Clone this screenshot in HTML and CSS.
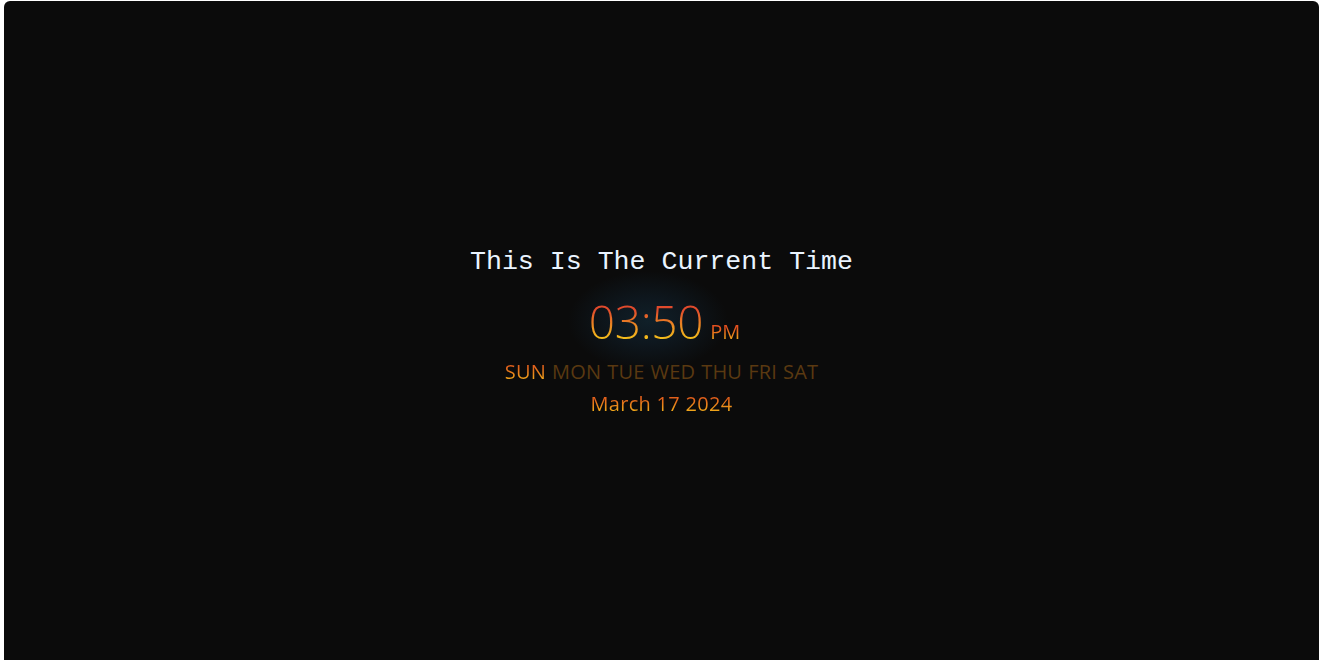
FILE: index.html
```html
<!DOCTYPE html>
<html lang="en">
<head>
<meta charset="utf-8">
<title>Current Time</title>
<link rel="stylesheet" href="styles.css">
</head>
<body>
<main class="panel">
  <section class="clock">
    <h1 class="title">This Is The Current Time</h1>
    <div class="time-row">
      <span class="time grad">03:50</span>
      <span class="ampm grad">PM</span>
    </div>
    <div class="days">
      <span class="day active grad">SUN</span>
      <span class="day">MON</span>
      <span class="day">TUE</span>
      <span class="day">WED</span>
      <span class="day">THU</span>
      <span class="day">FRI</span>
      <span class="day">SAT</span>
    </div>
    <div class="date grad">March 17 2024</div>
  </section>
</main>
</body>
</html>
```
FILE: styles.css
```css
html, body {
  margin: 0;
  padding: 0;
  background: #ffffff;
  overflow: hidden;
}

.panel {
  margin: 1px 0 0 4px;
  height: 659px;
  background: #0b0b0b;
  border-radius: 6px 6px 0 0;
  display: flex;
  align-items: center;
  justify-content: center;
}

.clock {
  display: flex;
  flex-direction: column;
  align-items: center;
  margin-top: 2px;
}

.title {
  margin: 0;
  font-family: "Liberation Mono", "Courier New", monospace;
  font-weight: normal;
  font-size: 26.6px;
  line-height: 30px;
  color: #eaf4ff;
}

.time-row {
  position: relative;
  isolation: isolate;
  display: flex;
  align-items: baseline;
  gap: 7px;
  margin: 21px 0 15px 6px;
  font-family: "Open Sans", "Noto Sans", sans-serif;
}

.time-row::before {
  content: "";
  position: absolute;
  z-index: -1;
  left: -26px;
  top: -27px;
  width: 170px;
  height: 100px;
  background: radial-gradient(ellipse 80px 50px at 50% 50%, #102029 0%, #0e171e 45%, rgba(11,11,11,0) 100%);
}

.grad {
  -webkit-background-clip: text;
  background-clip: text;
  color: transparent;
}

.time {
  font-size: 46px;
  font-weight: 300;
  line-height: 46px;
  letter-spacing: -0.3px;
  background-image: linear-gradient(180deg, #e04a2c 26%, #f6c81a 94%);
}

.ampm {
  font-size: 20px;
  font-weight: 400;
  line-height: 22px;
  background-image: linear-gradient(180deg, #e4501f 30%, #f2b21a 92%);
}

.days {
  display: flex;
  gap: 6px;
  font-family: "Open Sans", "Noto Sans", sans-serif;
  font-size: 20px;
  line-height: 26px;
  letter-spacing: 0.2px;
}

.day {
  color: #5a3911;
}

.day.active {
  color: transparent;
  background-image: linear-gradient(180deg, #e0601c 30%, #f2b41a 90%);
}

.date {
  margin-top: 6px;
  font-family: "Open Sans", "Noto Sans", sans-serif;
  font-size: 20px;
  line-height: 26px;
  letter-spacing: 0.3px;
  background-image: linear-gradient(180deg, #e2601b 30%, #f3ba1a 90%);
}
```
